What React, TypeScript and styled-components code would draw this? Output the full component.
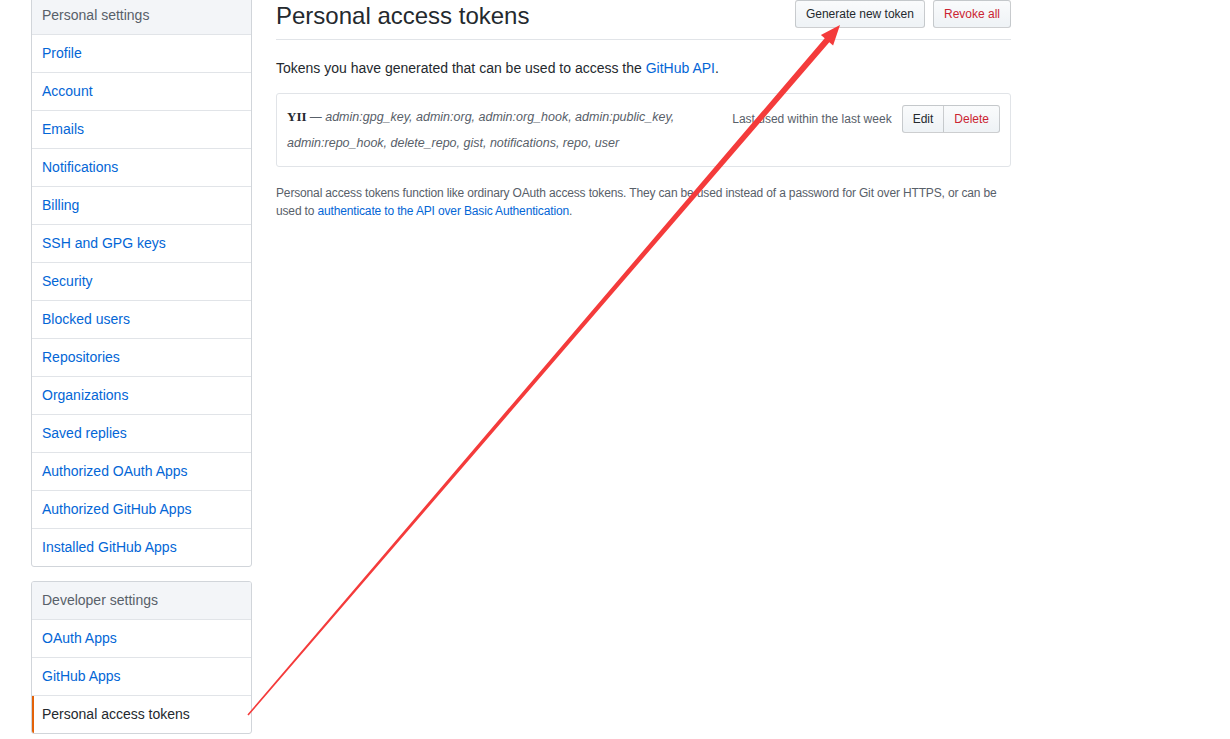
import React from "react";
import styled, { createGlobalStyle } from "styled-components";

const personalItems = [
  "Profile",
  "Account",
  "Emails",
  "Notifications",
  "Billing",
  "SSH and GPG keys",
  "Security",
  "Blocked users",
  "Repositories",
  "Organizations",
  "Saved replies",
  "Authorized OAuth Apps",
  "Authorized GitHub Apps",
  "Installed GitHub Apps",
];

const developerItems = ["OAuth Apps", "GitHub Apps", "Personal access tokens"];

const App: React.FC = () => {
  return (
    <Page>
      <GlobalStyle />
      <Layout>
        <Sidebar>
          <Menu>
            <MenuHeading>Personal settings</MenuHeading>
            {personalItems.map((item) => (
              <MenuItem key={item}>{item}</MenuItem>
            ))}
          </Menu>
          <Menu>
            <MenuHeading>Developer settings</MenuHeading>
            {developerItems.map((item) => (
              <MenuItem key={item} selected={item === "Personal access tokens"}>
                {item}
              </MenuItem>
            ))}
          </Menu>
        </Sidebar>

        <Main>
          <Subhead>
            <Heading>Personal access tokens</Heading>
            <Actions>
              <Button>Generate new token</Button>
              <Button danger>Revoke all</Button>
            </Actions>
          </Subhead>

          <Intro>
            Tokens you have generated that can be used to access the <Link>GitHub API</Link>.
          </Intro>

          <TokenBox>
            <TokenInfo>
              <TokenName>YII</TokenName> —{" "}
              <Scopes>
                admin:gpg_key, admin:org, admin:org_hook, admin:public_key,
                <br />
                admin:repo_hook, delete_repo, gist, notifications, repo, user
              </Scopes>
            </TokenInfo>
            <TokenMeta>
              <LastUsed>Last used within the last week</LastUsed>
              <ButtonGroup>
                <GroupButton>Edit</GroupButton>
                <GroupButton danger>Delete</GroupButton>
              </ButtonGroup>
            </TokenMeta>
          </TokenBox>

          <Note>
            <NoteLine>
              Personal access tokens function like ordinary OAuth access tokens. They can be used instead of a
              password for Git over HTTPS, or can be
            </NoteLine>
            <NoteLine>
              used to <Link>authenticate to the API over Basic Authentication</Link>.
            </NoteLine>
          </Note>
        </Main>
      </Layout>

      <Annotation width="1230" height="739" viewBox="0 0 1230 739">
        <polygon
          points="247.4,714.5 824.7,38.2 820.9,35 840,25 833.1,45.4 829.3,42.2 248.6,715.5"
          fill="#f43b3b"
        />
      </Annotation>
    </Page>
  );
};

export default App;

const GlobalStyle = createGlobalStyle`
  html, body {
    margin: 0;
    padding: 0;
    background: #fff;
  }
  body {
    font-family: "Segoe UI", "Liberation Sans", Arial, sans-serif;
    font-size: 14px;
    line-height: 1.5;
    color: #24292e;
    overflow: hidden;
  }
`;

const Page = styled.div`
  position: relative;
  width: 1230px;
  height: 739px;
  overflow: hidden;
`;

const Layout = styled.div`
  display: flex;
  align-items: flex-start;
  gap: 24px;
  padding-left: 31px;
`;

const Sidebar = styled.nav`
  width: 221px;
  display: flex;
  flex-direction: column;
  gap: 14px;
  flex-shrink: 0;
  margin-top: -4px;
`;

const Menu = styled.div`
  border: 1px solid #d1d5da;
  border-radius: 3px;
  background: #fff;
  overflow: hidden;
`;

const MenuHeading = styled.div`
  padding: 8px 10px;
  line-height: 21px;
  color: #586069;
  background: #f3f5f8;
  border-bottom: 1px solid #e1e4e8;
`;

const MenuItem = styled.div<{ selected?: boolean }>`
  position: relative;
  padding: 8px 10px;
  line-height: 21px;
  color: ${(p) => (p.selected ? "#24292e" : "#0366d6")};
  border-bottom: 1px solid #e1e4e8;

  &:last-child {
    border-bottom: none;
  }

  ${(p) =>
    p.selected &&
    `
    &::before {
      content: "";
      position: absolute;
      left: 0;
      top: 0;
      bottom: 0;
      width: 2px;
      background: #e36209;
    }
  `}
`;

const Main = styled.main`
  width: 735px;
  margin-top: 1px;
`;

const Subhead = styled.div`
  display: flex;
  align-items: flex-start;
  justify-content: space-between;
  padding-bottom: 8px;
  border-bottom: 1px solid #e1e4e8;
  margin-bottom: 18px;
`;

const Heading = styled.h2`
  margin: 0;
  font-size: 24px;
  font-weight: 400;
  line-height: 30px;
`;

const Actions = styled.div`
  display: flex;
  gap: 8px;
  margin-top: -1px;
`;

const Button = styled.button<{ danger?: boolean }>`
  font-family: inherit;
  font-size: 12px;
  line-height: 20px;
  padding: 3px 10px;
  color: ${(p) => (p.danger ? "#cb2431" : "#24292e")};
  background: linear-gradient(-180deg, #fafbfc 0%, #eff3f6 90%);
  border: 1px solid rgba(27, 31, 35, 0.2);
  border-radius: 3px;
  cursor: pointer;
`;

const Intro = styled.p`
  margin: 0 0 14px;
  line-height: 21px;
`;

const Link = styled.a`
  color: #0366d6;
  text-decoration: none;
`;

const TokenBox = styled.div`
  display: flex;
  justify-content: space-between;
  align-items: flex-start;
  padding: 10px;
  border: 1px solid #e1e4e8;
  border-radius: 3px;
  margin-bottom: 17px;
`;

const TokenInfo = styled.div`
  font-size: 12px;
  line-height: 26px;
  color: #586069;
`;

const TokenName = styled.strong`
  font-family: "Liberation Serif", "Times New Roman", serif;
  font-size: 13px;
  color: #24292e;
`;

const Scopes = styled.em`
  font-size: 12.5px;
`;

const TokenMeta = styled.div`
  display: flex;
  align-items: center;
  gap: 10px;
  margin-top: 1px;
`;

const LastUsed = styled.span`
  font-size: 12px;
  color: #586069;
`;

const ButtonGroup = styled.div`
  display: flex;
`;

const GroupButton = styled(Button)`
  border-radius: 0;
  &:first-child {
    border-radius: 3px 0 0 3px;
  }
  &:last-child {
    border-radius: 0 3px 3px 0;
    margin-left: -1px;
  }
`;

const Note = styled.div`
  font-size: 12px;
  line-height: 18px;
  color: #586069;
`;

const NoteLine = styled.div`
  white-space: nowrap;
  letter-spacing: -0.15px;
`;

const Annotation = styled.svg`
  position: absolute;
  top: 0;
  left: 0;
  pointer-events: none;
`;
